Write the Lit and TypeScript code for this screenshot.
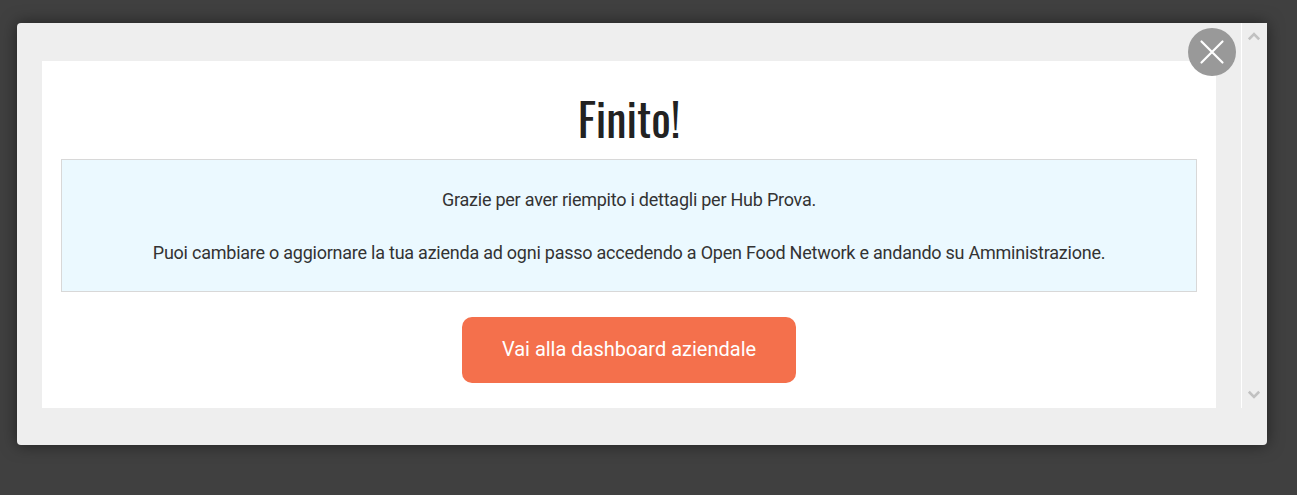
import { LitElement, html, css } from "lit";
import { customElement } from "lit/decorators.js";

@customElement("app-root")
export class AppRoot extends LitElement {
  static styles = css`
    :host {
      display: block;
      box-sizing: border-box;
      height: 495px;
      padding: 23px 30px 50px 17px;
      background: #404040;
      overflow: hidden;
      font-family: Roboto, "Liberation Sans", sans-serif;
      color: #333;
    }
    * { box-sizing: border-box; }
    .modal {
      position: relative;
      height: 422px;
      padding-bottom: 37px;
      background: #eee;
      border-radius: 4px 0 4px 4px;
      box-shadow: 0 0 16px rgba(0, 0, 0, 0.5);
    }
    .scroller { display: flex; height: 385px; }
    .content { flex: 1; padding: 38px 25px 0; }
    .card {
      height: 347px;
      padding: 25px 19px 25px;
      background: #fff;
      display: flex;
      flex-direction: column;
      align-items: center;
    }
    h1 {
      margin: 0;
      height: 73px;
      font: 400 46px/62px Oswald, "Liberation Sans", sans-serif;
      color: #222;
    }
    .panel {
      width: 100%;
      height: 133px;
      padding: 26px 20px 0;
      border: 1px solid #d8d8d8;
      background: #ebf9ff;
      text-align: center;
      font-size: 18px;
      line-height: 28px;
      letter-spacing: -0.24px;
    }
    p { margin: 0 0 25px; white-space: nowrap; }
    button {
      margin: 25px 0 0;
      width: 334px;
      height: 66px;
      padding: 0 0 2px;
      border: 0;
      border-radius: 10px;
      background: #f4704c;
      color: #fff;
      font: 400 20px Roboto, "Liberation Sans", sans-serif;
      white-space: nowrap;
    }
    .track {
      width: 26px;
      border-left: 1px solid #fff;
      padding: 8px 0 8px 6px;
      display: flex;
      flex-direction: column;
      justify-content: space-between;
    }
    .track svg { display: block; }
    .close {
      position: absolute;
      top: 5px;
      right: 31px;
      width: 48px;
      height: 48px;
      border-radius: 50%;
      background: #999;
    }
    .close svg { display: block; }
  `;

  render() {
    return html`
      <div class="modal">
        <div class="scroller">
          <div class="content">
            <div class="card">
              <h1>Finito!</h1>
              <div class="panel">
                <p>Grazie per aver riempito i dettagli per Hub Prova.</p>
                <p>Puoi cambiare o aggiornare la tua azienda ad ogni passo accedendo a Open Food Network e andando su Amministrazione.</p>
              </div>
              <button>Vai alla dashboard aziendale</button>
            </div>
          </div>
          <div class="track">
            <svg width="12" height="10" viewBox="0 0 12 10" fill="none" stroke="#c1c1c1" stroke-width="2.7"><path d="M.8 8.3 6 3.1 11.2 8.3" /></svg>
            <svg width="12" height="10" viewBox="0 0 12 10" fill="none" stroke="#c1c1c1" stroke-width="2.7"><path d="M.8 1.7 6 6.9 11.2 1.7" /></svg>
          </div>
        </div>
        <div class="close">
          <svg width="48" height="48" fill="none" stroke="#fff" stroke-width="2.2" stroke-linecap="round"><path d="M13.5 13.5 34.5 34.5M34.5 13.5 13.5 34.5" /></svg>
        </div>
      </div>
    `;
  }
}
